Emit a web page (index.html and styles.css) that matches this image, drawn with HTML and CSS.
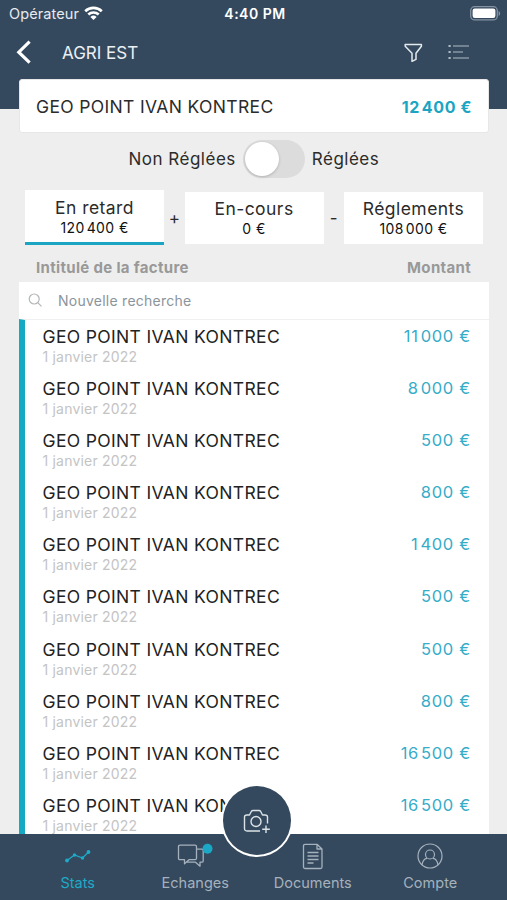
FILE: index.html
```html
<!DOCTYPE html>
<html lang="fr">
<head>
<meta charset="utf-8">
<title>AGRI EST</title>
<link rel="stylesheet" href="styles.css">
</head>
<body>
<div class="app">
  <header class="header">
    <div class="status">
      <div class="carrier"><span>Opérateur</span>
        <svg width="19" height="15" viewBox="0 0 19 15" fill="none" stroke="#fff" stroke-width="2.6"><path d="M1.2 5.2a12 12 0 0 1 16.6 0M4.3 8.5a7.6 7.6 0 0 1 10.4 0"/><path d="M9.5 14 6.4 10.9a4.5 4.5 0 0 1 6.2 0z" fill="#fff" stroke="none"/></svg>
      </div>
      <div class="clock">4:40 PM</div>
      <svg class="battery" width="31" height="15" viewBox="0 0 31 15"><rect x=".7" y=".7" width="26.6" height="13.2" rx="4" fill="none" stroke="#8493a2" stroke-width="1.3"/><rect x="2.6" y="2.6" width="22.8" height="9.4" rx="2.2" fill="#fff"/><path d="M28.6 5v5c2-.8 2-4.200 0-5z" fill="#8493a2"/></svg>
    </div>
    <div class="toolbar">
      <svg class="back" width="16" height="25" viewBox="0 0 16 25" fill="none" stroke="#fff" stroke-width="3.2"><path d="M13.600 1.700 2.800 12.200 13.600 22.700"/></svg>
      <h1 class="title">AGRI EST</h1>
      <svg class="filter" width="19" height="20" viewBox="0 0 19 20" fill="none" stroke="#e4e9ed" stroke-width="1.500" stroke-linejoin="round"><path d="M1.200 1.500h16.200v1.800l-5.400 7v6l-4 2v-8l-6.800-7z"/></svg>
      <svg class="menu" width="22" height="16" viewBox="0 0 22 16" stroke="#aebbc6" stroke-width="1.200"><path d="M5 2h16M5 8h10M5 14h16"/><path d="M.5 2h2.200M.5 8h2.200M.5 14h2.200" stroke-width="2.200"/></svg>
    </div>
  </header>
  <main class="content">
    <section class="summary"><span class="client">GEO POINT IVAN KONTREC</span><strong class="total">12<i></i>400 €</strong></section>
    <div class="switch-row"><span class="off">Non Réglées</span><span class="switch"><span class="knob"></span></span><span class="on">Réglées</span></div>
    <div class="tabs">
      <div class="tab active"><span class="label">En retard</span><span class="value">120<i></i>400 €</span></div>
      <span class="operator">+</span>
      <div class="tab"><span class="label">En-cours</span><span class="value">0 €</span></div>
      <span class="operator">-</span>
      <div class="tab"><span class="label">Réglements</span><span class="value">108<i></i>000 €</span></div>
    </div>
    <div class="columns"><span>Intitulé de la facture</span><span>Montant</span></div>
    <section class="panel">
      <div class="search"><svg width="15" height="15" viewBox="0 0 15 15" fill="none" stroke="#b3b7ba" stroke-width="1.200"><circle cx="6.200" cy="6" r="5"/><path d="m9.800 9.600 3.700 3.700"/></svg><span>Nouvelle recherche</span></div>
      <div class="list">
        <div class="row"><div><div class="name">GEO POINT IVAN KONTREC</div><div class="date">1 janvier 2022</div></div><span class="amount">11<i></i>000 €</span></div>
        <div class="row"><div><div class="name">GEO POINT IVAN KONTREC</div><div class="date">1 janvier 2022</div></div><span class="amount">8<i></i>000 €</span></div>
        <div class="row"><div><div class="name">GEO POINT IVAN KONTREC</div><div class="date">1 janvier 2022</div></div><span class="amount">500 €</span></div>
        <div class="row"><div><div class="name">GEO POINT IVAN KONTREC</div><div class="date">1 janvier 2022</div></div><span class="amount">800 €</span></div>
        <div class="row"><div><div class="name">GEO POINT IVAN KONTREC</div><div class="date">1 janvier 2022</div></div><span class="amount">1<i></i>400 €</span></div>
        <div class="row"><div><div class="name">GEO POINT IVAN KONTREC</div><div class="date">1 janvier 2022</div></div><span class="amount">500 €</span></div>
        <div class="row"><div><div class="name">GEO POINT IVAN KONTREC</div><div class="date">1 janvier 2022</div></div><span class="amount">500 €</span></div>
        <div class="row"><div><div class="name">GEO POINT IVAN KONTREC</div><div class="date">1 janvier 2022</div></div><span class="amount">800 €</span></div>
        <div class="row"><div><div class="name">GEO POINT IVAN KONTREC</div><div class="date">1 janvier 2022</div></div><span class="amount">16<i></i>500 €</span></div>
        <div class="row"><div><div class="name">GEO POINT IVAN KONTREC</div><div class="date">1 janvier 2022</div></div><span class="amount">16<i></i>500 €</span></div>
      </div>
    </section>
  </main>
  <nav class="nav">
    <div class="item selected"><svg width="28" height="28" viewBox="0 0 28 28" fill="none" stroke="currentColor" stroke-width="1.200"><path d="M3 18.500 10.500 13l8 3 6-6"/><g fill="currentColor" stroke="none"><circle cx="3" cy="18.500" r="1.900"/><circle cx="10.500" cy="13" r="1.700"/><circle cx="18.500" cy="16" r="1.700"/><circle cx="24.500" cy="10" r="1.900"/></g></svg><span>Stats</span></div>
    <div class="item"><svg width="36" height="28" viewBox="0 0 36 28" fill="none" stroke="currentColor" stroke-width="1.300" stroke-linejoin="round"><path d="M3 3.200h15q1.500 0 1.500 1.500v11.500q0 1.500-1.500 1.500h-6l-4.500 4v-4H3q-1.500 0-1.500-1.500V4.700q0-1.500 1.500-1.500zM20 7.200h5q1.200 0 1.200 1.200v10.600q0 1.200-1.200 1.200h-2v4l-4.500-4H10"/><circle cx="30.500" cy="6.700" r="5" fill="#1ba8c7" stroke="none"/></svg><span>Echanges</span></div>
    <div class="item"><svg width="28" height="28" viewBox="0 0 28 28" fill="none" stroke="currentColor" stroke-width="1.300" stroke-linejoin="round"><path d="M18 2.300H6Q4.500 2.300 4.500 3.800V25q0 1.500 1.500 1.500h15.500q1.500 0 1.500-1.500V7zM18 2.300V7h5M8.500 10.500h11M8.500 14h11M8.500 17.500h11M8.500 21h6"/></svg><span>Documents</span></div>
    <div class="item"><svg width="28" height="28" viewBox="0 0 28 28" fill="none" stroke="currentColor" stroke-width="1.200"><circle cx="14" cy="14" r="12"/><circle cx="14" cy="12.500" r="4.500"/><path d="M6 23q1-6.500 5-6.700M17 16.300q4 .2 5 6.700"/></svg><span>Compte</span></div>
    <div class="camera"><svg width="28" height="26" viewBox="0 0 28 26" fill="none" stroke="#dce3e8" stroke-width="1.400" stroke-linejoin="round"><path d="M17 23H4q-2.500 0-2.500-2.500V9Q1.500 7 4 7h2.500L8.300 3.500Q8.800 2.500 10 2.500h6q1.200 0 1.700 1L19.500 7H22q2.500 0 2.500 2v6.500"/><circle cx="13" cy="13.500" r="5"/><path d="M23 17.500v7.500M19.200 21.300h7.600"/></svg></div>
  </nav>
</div>
</body>
</html>
```
FILE: styles.css
```css
* { box-sizing: border-box; }
body { margin: 0; font-family: Inter, "Liberation Sans", sans-serif; color: #2b2b2b; }
svg { display: block; flex: none; }
.app { width: 507px; height: 900px; background: #eee; overflow: hidden; display: flex; flex-direction: column; }
.header { height: 109px; background: #34495e; flex: none; }
.status { height: 28px; display: grid; grid-template-columns: 1fr auto 1fr; align-items: center; color: #fff; padding: 0 6px 0 9px; }
.carrier { display: flex; gap: 5px; align-items: center; font-size: 14.500px; letter-spacing: .1px; color: #e7ebef; margin-top: -2px; }
.clock { font-size: 14px; font-weight: 600; letter-spacing: .5px; margin-top: -2px; }
.battery { justify-self: end; margin-top: -2px; }
.toolbar { display: flex; align-items: center; height: 48px; padding: 0 37px 0 16px; }
.title { margin: 2px auto 0 30px; font-size: 17px; font-weight: 400; color: #edf0f3; line-height: 20px; }
.filter { margin-right: 25px; margin-top: 1px; }
.content { flex: 1; min-height: 0; margin-top: -30px; padding: 0 18px 0 19px; overflow: hidden; }
.summary { height: 54px; background: #fff; border: 1px solid #e7e7e7; border-radius: 3px; display: flex; align-items: center; justify-content: space-between; padding: 1px 16px 0 16px; font-size: 17.500px; letter-spacing: .35px; }
i { display: inline-block; width: 2px; }
.total { color: #1ba5c3; font-size: 16px; font-weight: 700; letter-spacing: .6px; }
.switch-row { height: 52px; display: flex; align-items: center; padding-left: 109.500px; font-size: 17px; letter-spacing: .5px; }
.switch { width: 62px; height: 38px; border-radius: 19px; background: #dcdcdc; margin: 0 7px; padding: 2px; }
.knob { display: block; width: 34px; height: 34px; border-radius: 50%; background: #fff; box-shadow: 0 1px 3px #0003; }
.tabs { display: flex; padding-left: 6px; padding-top: 5px; height: 60px; }
.tab { width: 139px; height: 52px; margin-top: 2px; background: #fff; display: flex; flex-direction: column; align-items: center; padding-top: 6px; }
.tab.active { height: 55px; margin-top: 0; padding-top: 7px; border-bottom: 3px solid #1ba5c3; }
.label { font-size: 17.500px; letter-spacing: .45px; line-height: 22px; }
.value { font-size: 14px; letter-spacing: .4px; line-height: 18px; color: #111; }
.operator { width: 20.500px; text-align: center; padding-top: 18px; font-size: 17px; line-height: 20px; }
.columns { display: flex; justify-content: space-between; height: 37px; padding: 13px 18px 0 17px; font-size: 15px; font-weight: 700; letter-spacing: .33px; color: #999; line-height: 20px; }
.panel { background: #fff; }
.search { height: 37px; display: flex; align-items: center; padding-left: 9px; gap: 15px; font-size: 14px; letter-spacing: .25px; color: #8b949b; }
.list { border-left: 6px solid #16a9c4; border-top: 1px solid #f0f0f0; }
.row { height: 52.100px; display: flex; justify-content: space-between; padding: 6px 18px 0 17.500px; }
.name { font-size: 17.500px; letter-spacing: .35px; line-height: 22px; color: #222; }
.date { font-size: 14px; letter-spacing: .2px; line-height: 18px; color: #c4c4c4; }
.amount { font-size: 16.500px; letter-spacing: .7px; line-height: 21px; color: #36acc9; }
.nav { position: relative; height: 66px; flex: none; background: #34495e; display: grid; grid-template-columns: repeat(4, 117.500px); padding-left: 19px; }
.item { display: flex; flex-direction: column; align-items: center; gap: 4px; padding-top: 8px; color: #a5b1bc; font-size: 14.500px; line-height: 17px; }
.selected { color: #1faac8; }
.camera { position: absolute; left: 220.500px; top: -50px; width: 72px; height: 73px; border-radius: 50%; background: #34495e; border: 2.500px solid #fff; display: flex; align-items: center; justify-content: center; }
```
